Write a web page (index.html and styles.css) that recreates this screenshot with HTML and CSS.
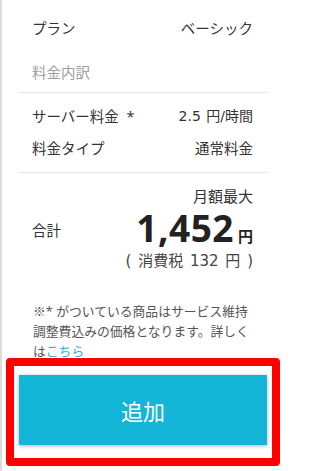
FILE: index.html
```html
<!DOCTYPE html>
<html lang="ja">
<head>
<meta charset="utf-8">
<link rel="stylesheet" href="styles.css">
</head>
<body>
<div class="page">
  <div class="panel">
    <div class="row plan"><span>プラン</span><span>ベーシック</span></div>
    <div class="section-label">料金内訳</div>
    <div class="row fee"><span>サーバー料金 *</span><span class="latin">2.5 円/時間</span></div>
    <div class="row type"><span>料金タイプ</span><span>通常料金</span></div>
    <div class="total">
      <div class="total-cap">月額最大</div>
      <div class="total-row">
        <span class="total-label">合計</span>
        <span class="total-amount"><span class="num">1,452</span><span class="yen">円</span></span>
      </div>
      <div class="tax">( 消費税 132 円 )</div>
    </div>
    <p class="note">※* がついている商品はサービス維持<br>調整費込みの価格となります。詳しく<br>は<a class="link" href="#">こちら</a></p>
    <button class="add-btn" type="button">追加</button>
  </div>
  <div class="highlight"></div>
</div>
</body>
</html>
```
FILE: styles.css
```css
html, body {
  margin: 0;
  padding: 0;
  background: #fff;
}
body {
  font-family: "Open Sans", "Noto Sans CJK JP", sans-serif;
  color: #333;
}
.page {
  position: relative;
  width: 283px;
  height: 471px;
  box-sizing: border-box;
  border-left: 2px solid #dcdcdc;
  overflow: hidden;
}
.panel {
  margin-left: 17px;
  width: 248px;
  display: flex;
  flex-direction: column;
}
.row {
  display: flex;
  justify-content: space-between;
  align-items: center;
  height: 32px;
  padding: 0 14px 0 13px;
  font-size: 14.5px;
  white-space: nowrap;
  word-spacing: 4px;
}
.latin {
  font-family: "DejaVu Sans", "Noto Sans CJK JP", sans-serif;
  font-size: 14px;
  word-spacing: 1px;
}
.plan {
  margin-top: 11px;
}
.section-label {
  margin-top: 14px;
  height: 32px;
  line-height: 32px;
  padding: 0 13px 3px;
  font-size: 14.5px;
  color: #a0a0a0;
  border-bottom: 1px solid #e2e2e2;
}
.fee {
  margin-top: 6px;
}
.type {
  padding-bottom: 9px;
  border-bottom: 1px solid #e2e2e2;
  height: 32px;
  box-sizing: content-box;
}
.total {
  display: flex;
  flex-direction: column;
  padding: 0 14px 0 13px;
}
.total-cap {
  margin-top: 13px;
  text-align: right;
  font-size: 15px;
  line-height: 20px;
}
.total-row {
  display: flex;
  justify-content: space-between;
  align-items: center;
  height: 42px;
}
.total-label {
  font-size: 14.5px;
  margin-top: 4px;
}
.total-amount {
  display: flex;
  align-items: baseline;
  color: #222;
  line-height: 1;
}
.num {
  font-size: 37px;
  font-weight: 700;
  letter-spacing: 0.5px;
  line-height: 1;
}
.yen {
  font-size: 15px;
  font-weight: 700;
  margin-left: 4px;
}
.tax {
  margin-top: 3px;
  text-align: right;
  font-family: "DejaVu Sans", "Noto Sans CJK JP", sans-serif;
  font-size: 15px;
  line-height: 20px;
  word-spacing: 2px;
  color: #444;
}
.note {
  margin: 30px 0 0;
  padding: 0 0 0 14px;
  font-size: 12.8px;
  line-height: 20px;
  color: #555;
  white-space: nowrap;
}
.link {
  color: #2ab4dc;
  text-decoration: none;
}
.add-btn {
  margin-top: 14px;
  height: 70px;
  width: 248px;
  border: none;
  background: #13b6d7;
  color: #fff;
  font-family: "Noto Sans CJK JP", sans-serif;
  font-size: 22px;
  box-shadow: 0 1px 4px rgba(0, 0, 0, 0.3);
  cursor: pointer;
}
.highlight {
  position: absolute;
  left: 4px;
  top: 358px;
  width: 274px;
  height: 108px;
  box-sizing: border-box;
  border: 8px solid #ff0000;
  border-radius: 4px;
  pointer-events: none;
}
```
